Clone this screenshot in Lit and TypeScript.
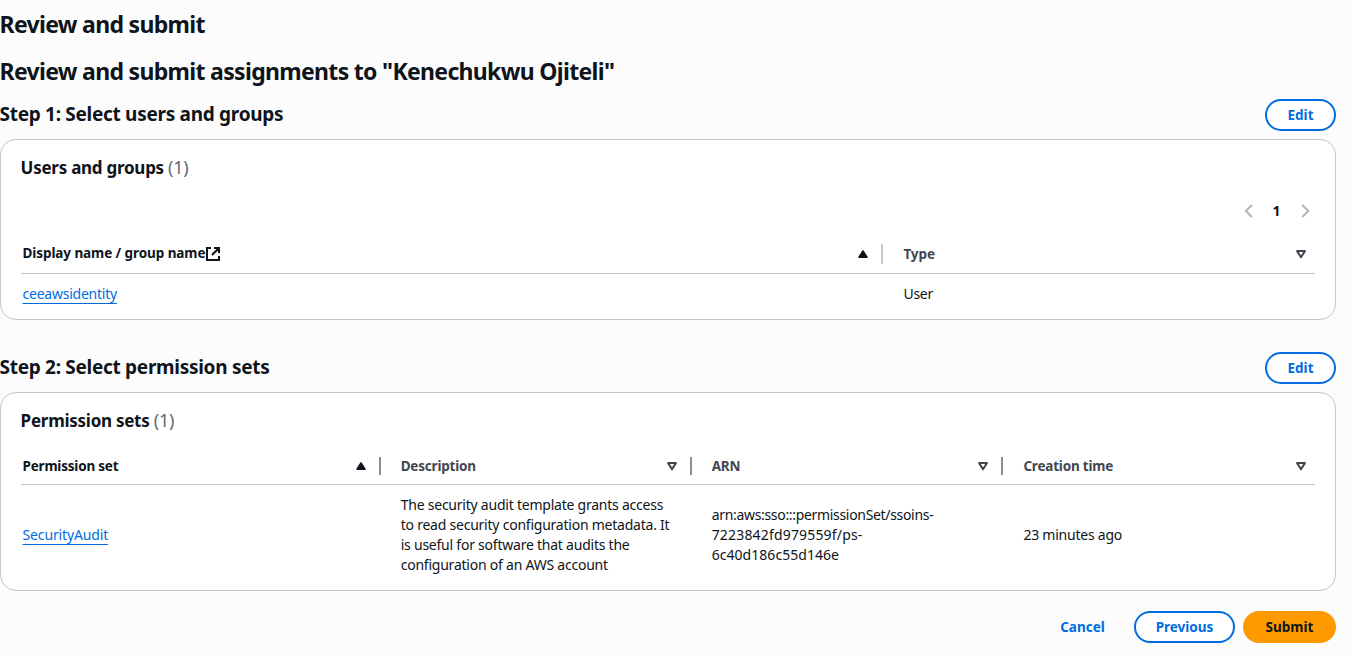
import { LitElement, html, css, svg, nothing } from "lit";
import type { TemplateResult } from "lit";
import { customElement, property } from "lit/decorators.js";

const base = css`
  * {
    box-sizing: border-box;
  }
  h1,
  h2,
  h3,
  h4,
  p {
    margin: 0;
  }
`;

@customElement("sort-icon")
class SortIcon extends LitElement {
  @property({ type: Boolean }) active = false;

  static styles = css`
    :host {
      display: block;
      width: 10px;
      height: 9px;
      flex: none;
    }
    svg {
      display: block;
    }
  `;

  render() {
    return html`<svg width="10" height="9" viewBox="0 0 10 9" stroke-linejoin="round">
      ${this.active
        ? svg`<path d="M5 1 9 7.3H1Z" fill="#0f141a" stroke="#0f141a" stroke-width="1.6" />`
        : svg`<path d="M1.1 1.1H8.9L5 7.3Z" fill="none" stroke="#424650" stroke-width="2" />`}
    </svg>`;
  }
}

@customElement("pill-button")
class PillButton extends LitElement {
  @property() variant = "normal";

  static styles = [
    base,
    css`
      :host {
        display: block;
      }
      .button {
        display: block;
        width: 100%;
        height: 32px;
        padding: 4px 0;
        border: 2px solid #006ce0;
        border-radius: 20px;
        background: #fff;
        color: #006ce0;
        font: 700 13.5px/20px "Noto Sans", "Open Sans", sans-serif;
        text-align: center;
      }
      .primary {
        border-color: #ff9900;
        background: #ff9900;
        color: #0f141a;
      }
      .link {
        border-color: transparent;
        background: transparent;
      }
    `,
  ];

  render() {
    return html`<button class="button ${this.variant}"><slot></slot></button>`;
  }
}

@customElement("app-root")
class AppRoot extends LitElement {
  static styles = [
    base,
    css`
      :host {
        display: block;
        height: 656px;
        overflow: hidden;
        background: #fcfcfd;
        color: #0f141a;
        font: 400 14px/20px "Noto Sans", "Open Sans", sans-serif;
        letter-spacing: -0.23px;
      }
      .page {
        width: 1336px;
        padding-top: 9px;
      }
      .title {
        font-size: 23px;
        line-height: 30px;
        font-weight: 700;
        letter-spacing: -0.68px;
        margin: 0 0 17px -0.5px;
      }
      .subtitle {
        margin-bottom: 13px;
      }
      .step {
        display: flex;
        justify-content: space-between;
        align-items: flex-start;
        margin-bottom: 8px;
      }
      .step-title {
        font-size: 19px;
        line-height: 24px;
        font-weight: 700;
        letter-spacing: -0.29px;
        margin: 3px 0 0 -0.5px;
      }
      .edit {
        width: 71px;
      }
      .card {
        border: 1px solid #c6c6cd;
        border-radius: 16px;
        background: #fff;
        padding: 16px 20px 15px;
      }
      .users {
        margin-bottom: 32px;
      }
      .card-title {
        height: 22px;
        font-size: 17px;
        line-height: 22px;
        font-weight: 700;
        letter-spacing: -0.26px;
        margin-left: -0.4px;
      }
      .count {
        font-size: 18px;
        font-weight: 400;
        color: #656871;
        letter-spacing: -0.2px;
      }
      .pagination {
        display: flex;
        justify-content: flex-end;
        align-items: center;
        height: 32px;
        margin: 17px 5px 17px 0;
      }
      .page-number {
        width: 48px;
        padding-right: 1px;
        text-align: center;
        font-weight: 700;
      }
      .chevron {
        display: block;
        width: 9px;
        height: 14px;
      }
      .row {
        display: grid;
        align-items: center;
      }
      .two {
        grid-template-columns: 862px 1fr;
      }
      .four {
        grid-template-columns: 360px 311px 311px 1fr;
      }
      .head {
        padding-bottom: 9px;
        border-bottom: 1px solid #c6c6cd;
        font-size: 13.5px;
        font-weight: 700;
        letter-spacing: -0.08px;
        color: #424650;
      }
      .four.head {
        margin-top: 25px;
        padding-bottom: 8px;
        letter-spacing: -0.2px;
      }
      .th {
        display: flex;
        align-items: center;
        height: 20px;
        padding-left: 19.7px;
      }
      .th:first-child {
        padding-left: 1.5px;
        color: #0f141a;
      }
      .th:last-child {
        padding-left: 20.4px;
        padding-right: 9px;
      }
      .label {
        flex: 1;
        display: flex;
        align-items: center;
      }
      .raised {
        margin-top: -2px;
      }
      .external {
        display: block;
        margin: 2px 0 0 0.7px;
      }
      .divider {
        width: 2px;
        height: 20px;
        margin-left: 13px;
        background: #c6c6cd;
      }
      .four .divider {
        height: 18px;
        background: #8c8c94;
      }
      .body {
        padding-top: 10px;
      }
      .td {
        padding: 0 18px 0 19.7px;
      }
      .td:first-child {
        padding-left: 1.5px;
      }
      .td:last-child {
        padding-left: 20.4px;
      }
      .link {
        color: #006ce0;
        text-decoration: underline 1px;
        text-underline-offset: 4px;
        text-decoration-skip-ink: none;
      }
      .four .link {
        letter-spacing: -0.14px;
      }
      .line {
        display: block;
        white-space: nowrap;
      }
      .arn-head {
        letter-spacing: -0.32px;
      }
      .arn-mid {
        letter-spacing: 0.17px;
      }
      .arn-tail {
        letter-spacing: 0.04px;
      }
      .footer {
        display: flex;
        justify-content: flex-end;
        margin-top: 20px;
      }
      .cancel {
        width: 89px;
        margin-right: 7px;
      }
      .previous {
        width: 101px;
        margin-right: 8px;
      }
      .submit {
        width: 93px;
      }
    `,
  ];

  private th(label: string | TemplateResult, active: boolean, divider: boolean, raised = false) {
    return html`<div class="th">
      <span class="label ${raised ? "raised" : ""}">${label}</span>
      <sort-icon ?active=${active}></sort-icon>
      ${divider ? html`<span class="divider"></span>` : nothing}
    </div>`;
  }

  private chevron(d: string) {
    return html`<svg class="chevron" viewBox="0 0 9 14">
      <path d=${d} fill="none" stroke="#b4b4bb" stroke-width="2" />
    </svg>`;
  }

  private step(title: string) {
    return html`<div class="step">
      <h3 class="step-title">${title}</h3>
      <pill-button class="edit">Edit</pill-button>
    </div>`;
  }

  render() {
    return html`<main class="page">
      <h1 class="title">Review and submit</h1>
      <h2 class="title subtitle">Review and submit assignments to "Kenechukwu Ojiteli"</h2>

      ${this.step("Step 1: Select users and groups")}
      <section class="card users">
        <h4 class="card-title">Users and groups <span class="count">(1)</span></h4>
        <div class="pagination">
          ${this.chevron("M7.9 1 1.9 7l6 6")}
          <span class="page-number">1</span>
          ${this.chevron("M1.3 1l6 6-6 6")}
        </div>
        <div class="row two head">
          ${this.th(
            html`Display name / group name<svg class="external" width="14" height="14" viewBox="0 0 14 14" fill="none" stroke="#0f141a" stroke-width="2">
                <path d="M5 1H1v12h12V9M8 1h5v5M13 1 6 8" />
              </svg>`,
            true,
            true,
            true
          )}
          ${this.th("Type", false, false)}
        </div>
        <div class="row two body">
          <div class="td"><a class="link">ceeawsidentity</a></div>
          <div class="td">User</div>
        </div>
      </section>

      ${this.step("Step 2: Select permission sets")}
      <section class="card">
        <h4 class="card-title">Permission sets <span class="count">(1)</span></h4>
        <div class="row four head">
          ${this.th("Permission set", true, true)}
          ${this.th("Description", false, true)}
          ${this.th("ARN", false, true)}
          ${this.th("Creation time", false, false)}
        </div>
        <div class="row four body">
          <div class="td"><a class="link">SecurityAudit</a></div>
          <div class="td">
            The security audit template grants access to read security configuration metadata. It is
            useful for software that audits the configuration of an AWS account
          </div>
          <div class="td">
            <span class="line arn-head">arn:aws:sso:::permissionSet/ssoins-</span>
            <span class="line arn-mid">7223842fd979559f/ps-</span>
            <span class="line arn-tail">6c40d186c55d146e</span>
          </div>
          <div class="td">23 minutes ago</div>
        </div>
      </section>

      <div class="footer">
        <pill-button class="cancel" variant="link">Cancel</pill-button>
        <pill-button class="previous">Previous</pill-button>
        <pill-button class="submit" variant="primary">Submit</pill-button>
      </div>
    </main>`;
  }
}
